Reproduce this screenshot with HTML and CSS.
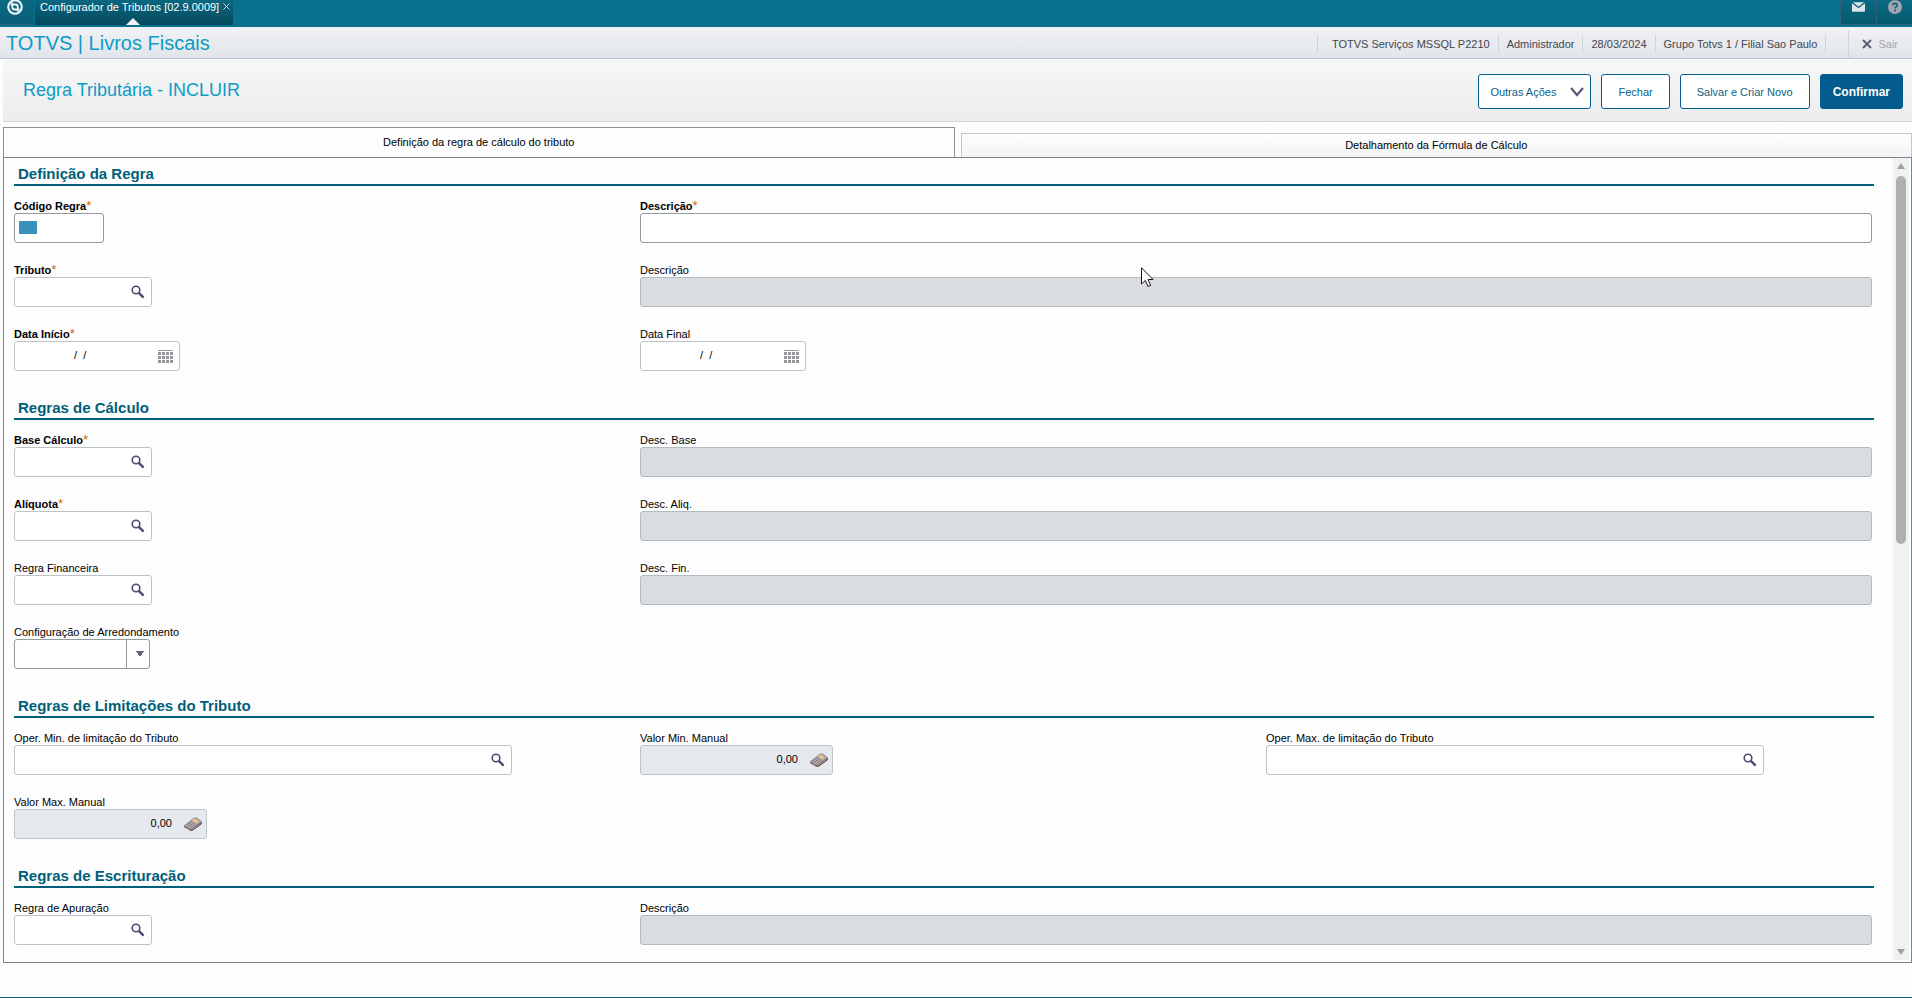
FILE: index.html
```html
<!DOCTYPE html>
<html lang="pt-BR">
<head>
    <meta charset="UTF-8">
    <meta name="viewport" content="width=device-width, initial-scale=1.0">
    <title>Configurador de Tributos</title>
    <link rel="stylesheet" href="styles.css">
</head>
<body>

    <!-- Shared icons -->
    <svg class="sprite" aria-hidden="true">
        <symbol id="icon-search" viewBox="0 0 14 14">
            <circle cx="5" cy="5" r="3.8" fill="none" stroke="#4a4a70" stroke-width="1.6"/>
            <path d="M7.8 7.8L12.6 12.6" stroke="#4a4a70" stroke-width="2.4"/>
        </symbol>
        <symbol id="icon-calendar" viewBox="0 0 15 13">
            <path d="M0 .5H15" stroke="#96969c" stroke-width="1"/>
            <path d="M0 3.5H15M0 7.5H15M0 11.5H15" stroke="#96969c" stroke-width="3" stroke-dasharray="3 1"/>
        </symbol>
        <symbol id="icon-calc" viewBox="0 0 18 14">
            <path d="M0 8.5L9 1.2Q11 0 13 .8L17.5 4.3V7L9 13Q7.500 14 5 13L0 10.500Z" fill="#8b8285"/>
            <path d="M.8 8.300L9.500 1.500Q11 .8 12.500 1.500L16.500 4.500L8.500 10.500Q7 11.500 5 10.500Z" fill="#b9b2ac"/>
            <path d="M8.500 3.200L10.500 1.700L14.500 4.500L12.300 6Z" fill="#f2c584"/>
            <path d="M2.500 8.200L7.500 4.500M4.500 9.200L9.500 5.500M6.800 10L11.500 6.500" stroke="#7b7375" stroke-width="1.200" stroke-dasharray="1.500 .8"/>
            <path d="M17.300 5V7L9 13Q7.500 14 5.500 13" fill="none" stroke="#6b4f58" stroke-width="1"/>
        </symbol>
    </svg>

    <!-- Top bar -->
    <div class="topbar">
        <button class="logo" aria-label="Início">
            <svg width="16" height="16" viewBox="0 0 16 16">
                <circle cx="8" cy="8" r="6.800" fill="none" stroke="#f4f8fa" stroke-width="2"/>
                <path d="M3.500 5.500H8.500Q10.800 5.500 10.800 8V12.500" fill="none" stroke="#f4f8fa" stroke-width="1.800"/>
                <path d="M5.300 3.500V8Q5.300 10.500 7.700 10.500H12.500" fill="none" stroke="#f4f8fa" stroke-width="1.800"/>
            </svg>
        </button>
        <div class="window-tab">
            <span>Configurador de Tributos [02.9.0009]</span>
            <button class="window-close" aria-label="Fechar aba">
                <svg width="7" height="7" viewBox="0 0 7 7"><path d="M.5 .5L6.500 6.500M6.500 .5L.5 6.500" stroke="#c6dbe2"/></svg>
            </button>
        </div>
        <div class="topbar-tools">
            <button class="tool" aria-label="Mensagens">
                <svg width="13" height="10" viewBox="0 0 14 10">
                    <rect width="14" height="10" rx="1" fill="#dde5e9"/>
                    <path d="M0 0L7 5.500L14 0" fill="none" stroke="#0b6178" stroke-width="1.400"/>
                </svg>
            </button>
            <button class="tool" aria-label="Ajuda">
                <svg width="14" height="14" viewBox="0 0 14 14">
                    <circle cx="7" cy="7" r="7" fill="#a3a6ac"/>
                    <path d="M4.800 5.300Q4.900 3.300 7 3.300T9.200 5.200Q9.200 6.200 8 6.900Q7 7.500 7 8.600" fill="none" stroke="#0b6178" stroke-width="1.700"/>
                    <rect x="6.100" y="9.600" width="1.800" height="1.800" fill="#0b6178"/>
                </svg>
            </button>
        </div>
    </div>

    <!-- Module header -->
    <header class="header">
        <h1>TOTVS | Livros Fiscais</h1>
        <ul class="session">
            <li>TOTVS Serviços MSSQL P2210</li>
            <li>Administrador</li>
            <li>28/03/2024</li>
            <li>Grupo Totvs 1 / Filial Sao Paulo</li>
        </ul>
        <button class="exit">
            <svg width="10" height="10" viewBox="0 0 10 10"><path d="M1 1L9 9M9 1L1 9" stroke="#5f5f74" stroke-width="2"/></svg>
            Sair
        </button>
    </header>

    <!-- Title and actions -->
    <div class="titlebar">
        <h2>Regra Tributária - INCLUIR</h2>
        <div class="actions">
            <button class="button button-menu">
                Outras Ações
                <svg width="14" height="10" viewBox="0 0 14 10"><path d="M1 1L7 8L13 1" fill="none" stroke="#5a5a78" stroke-width="2.200"/></svg>
            </button>
            <button class="button">Fechar</button>
            <button class="button">Salvar e Criar Novo</button>
            <button class="button button-primary">Confirmar</button>
        </div>
    </div>

    <div class="tabs" role="tablist">
        <button class="tab tab-active" role="tab" aria-selected="true">Definição da regra de cálculo do tributo</button>
        <button class="tab" role="tab" aria-selected="false">Detalhamento da Fórmula de Cálculo</button>
    </div>

    <main class="panel">
        <form class="form">

            <section class="section">
                <h3>Definição da Regra</h3>
                <div class="fields">
                    <div class="field">
                        <label class="required" for="codigo">Código Regra</label>
                        <div class="box box-code"><input type="text" id="codigo"></div>
                    </div>
                    <div class="field wide">
                        <label class="required" for="descricao">Descrição</label>
                        <div class="box box-strong"><input type="text" id="descricao"></div>
                    </div>
                    <div class="field">
                        <label class="required" for="tributo">Tributo</label>
                        <div class="box box-lookup">
                            <input type="text" id="tributo">
                            <button type="button" aria-label="Pesquisar"><svg width="14" height="14"><use href="#icon-search"/></svg></button>
                        </div>
                    </div>
                    <div class="field wide">
                        <label for="descTributo">Descrição</label>
                        <div class="box box-disabled"><input type="text" id="descTributo" disabled></div>
                    </div>
                    <div class="field">
                        <label class="required" for="dataInicio">Data Início</label>
                        <div class="box box-date">
                            <input type="text" id="dataInicio" value="/  /">
                            <button type="button" aria-label="Calendário"><svg width="15" height="13"><use href="#icon-calendar"/></svg></button>
                        </div>
                    </div>
                    <div class="field wide">
                        <label for="dataFinal">Data Final</label>
                        <div class="box box-date">
                            <input type="text" id="dataFinal" value="/  /">
                            <button type="button" aria-label="Calendário"><svg width="15" height="13"><use href="#icon-calendar"/></svg></button>
                        </div>
                    </div>
                </div>
            </section>

            <section class="section">
                <h3>Regras de Cálculo</h3>
                <div class="fields">
                    <div class="field">
                        <label class="required" for="base">Base Cálculo</label>
                        <div class="box box-lookup">
                            <input type="text" id="base">
                            <button type="button" aria-label="Pesquisar"><svg width="14" height="14"><use href="#icon-search"/></svg></button>
                        </div>
                    </div>
                    <div class="field wide">
                        <label for="descBase">Desc. Base</label>
                        <div class="box box-disabled"><input type="text" id="descBase" disabled></div>
                    </div>
                    <div class="field">
                        <label class="required" for="aliquota">Alíquota</label>
                        <div class="box box-lookup">
                            <input type="text" id="aliquota">
                            <button type="button" aria-label="Pesquisar"><svg width="14" height="14"><use href="#icon-search"/></svg></button>
                        </div>
                    </div>
                    <div class="field wide">
                        <label for="descAliq">Desc. Aliq.</label>
                        <div class="box box-disabled"><input type="text" id="descAliq" disabled></div>
                    </div>
                    <div class="field">
                        <label for="financeira">Regra Financeira</label>
                        <div class="box box-lookup">
                            <input type="text" id="financeira">
                            <button type="button" aria-label="Pesquisar"><svg width="14" height="14"><use href="#icon-search"/></svg></button>
                        </div>
                    </div>
                    <div class="field wide">
                        <label for="descFin">Desc. Fin.</label>
                        <div class="box box-disabled"><input type="text" id="descFin" disabled></div>
                    </div>
                    <div class="field">
                        <label for="arredondamento">Configuração de Arredondamento</label>
                        <div class="box box-select">
                            <select id="arredondamento"><option></option></select>
                        </div>
                    </div>
                </div>
            </section>

            <section class="section">
                <h3>Regras de Limitações do Tributo</h3>
                <div class="fields">
                    <div class="field">
                        <label for="operMin">Oper. Min. de limitação do Tributo</label>
                        <div class="box box-lookup box-long">
                            <input type="text" id="operMin">
                            <button type="button" aria-label="Pesquisar"><svg width="14" height="14"><use href="#icon-search"/></svg></button>
                        </div>
                    </div>
                    <div class="field">
                        <label for="valorMin">Valor Min. Manual</label>
                        <div class="box box-value">
                            <input type="text" id="valorMin" value="0,00">
                            <button type="button" aria-label="Calculadora"><svg width="18" height="14"><use href="#icon-calc"/></svg></button>
                        </div>
                    </div>
                    <div class="field">
                        <label for="operMax">Oper. Max. de limitação do Tributo</label>
                        <div class="box box-lookup box-long">
                            <input type="text" id="operMax">
                            <button type="button" aria-label="Pesquisar"><svg width="14" height="14"><use href="#icon-search"/></svg></button>
                        </div>
                    </div>
                    <div class="field">
                        <label for="valorMax">Valor Max. Manual</label>
                        <div class="box box-value">
                            <input type="text" id="valorMax" value="0,00">
                            <button type="button" aria-label="Calculadora"><svg width="18" height="14"><use href="#icon-calc"/></svg></button>
                        </div>
                    </div>
                </div>
            </section>

            <section class="section">
                <h3>Regras de Escrituração</h3>
                <div class="fields">
                    <div class="field">
                        <label for="apuracao">Regra de Apuração</label>
                        <div class="box box-lookup">
                            <input type="text" id="apuracao">
                            <button type="button" aria-label="Pesquisar"><svg width="14" height="14"><use href="#icon-search"/></svg></button>
                        </div>
                    </div>
                    <div class="field wide">
                        <label for="descApuracao">Descrição</label>
                        <div class="box box-disabled"><input type="text" id="descApuracao" disabled></div>
                    </div>
                </div>
            </section>

        </form>

        <div class="scrollbar" aria-hidden="true">
            <svg width="8" height="6" viewBox="0 0 8 6"><path d="M4 0L8 6H0Z" fill="#a0a0a0"/></svg>
            <div class="track"><div class="thumb"></div></div>
            <svg width="8" height="6" viewBox="0 0 8 6"><path d="M0 0H8L4 6Z" fill="#a0a0a0"/></svg>
        </div>
    </main>

    <!-- Mouse pointer -->
    <svg class="pointer" width="13" height="21" viewBox="0 0 13 21" aria-hidden="true">
        <path d="M.5 .8V17L4.300 13.500L7 19.500L9.600 18.400L7 12.500H12Z" fill="#fff" stroke="#1c1024"/>
    </svg>

</body>
</html>
```
FILE: styles.css
```css
* {
    box-sizing: border-box;
}

body {
    margin: 0;
    min-height: 100vh;
    display: flex;
    flex-direction: column;
    position: relative;
    background: #fdfdfd;
    border-bottom: 1px solid #0b6178;
    font-family: "Liberation Sans", Arial, sans-serif;
    font-size: 11px;
    line-height: 14px;
    color: #000;
}

button,
input,
select {
    font: inherit;
    color: inherit;
    margin: 0;
    padding: 0;
    border: 0;
    background: none;
}

button {
    cursor: pointer;
}

svg {
    display: block;
}

h1,
h2,
h3 {
    margin: 0;
    font-weight: normal;
}

.sprite {
    position: absolute;
    width: 0;
    height: 0;
}

/* Top bar */
.topbar {
    display: flex;
    height: 27px;
    padding-bottom: 2px;
    background: #09718e;
}

.logo {
    width: 34px;
    padding: 0 0 10px 7px;
    background: linear-gradient(#0a6a84, #096078);
    border-right: 1px solid #215f78;
    border-bottom: 1px solid #315f78;
    display: flex;
    align-items: center;
}

.window-tab {
    position: relative;
    display: flex;
    align-items: flex-start;
    gap: 4px;
    margin-left: 1px;
    padding: 0 3px 0 5px;
    background: linear-gradient(#0a6780, #054a5c);
    color: #fff;
}

.window-tab::after {
    content: "";
    position: absolute;
    left: 50%;
    bottom: 0;
    margin-left: -8px;
    border: 7px solid transparent;
    border-top: 0;
    border-bottom-color: #eff1f4;
}

.window-close {
    padding-top: 3px;
}

.topbar-tools {
    display: flex;
    margin-left: auto;
}

.tool {
    width: 36px;
    padding-bottom: 10px;
    display: flex;
    align-items: center;
    justify-content: center;
    background: linear-gradient(#0a6a84, #06586e);
    border-left: 1px solid #315f78;
    border-bottom: 1px solid #315f78;
}

/* Module header */
.header {
    display: flex;
    align-items: stretch;
    height: 32px;
    padding-left: 6px;
    background: linear-gradient(#f0f2f5, #e1e4e9);
    border-bottom: 1px solid #bcc3ca;
}

.header h1 {
    margin-right: auto;
    font-size: 20px;
    line-height: 33px;
    color: #0d9bc6;
}

.session {
    display: flex;
    align-items: center;
    margin: 0;
    padding: 2px 22px 0 0;
    list-style: none;
    color: #45454d;
}

.session li {
    padding: 2px 8px;
    border-left: 1px solid #d0d4d6;
}

.session li:first-child {
    padding-left: 14px;
}

.session li:last-child {
    border-right: 1px solid #d0d4d6;
}

.exit {
    display: flex;
    align-items: center;
    gap: 6px;
    margin-top: 3px;
    padding: 0 14px 1px 13px;
    border-left: 1px solid #d0d4d6;
    color: #a3a3a8;
}

/* Title and actions */
.titlebar {
    display: flex;
    justify-content: space-between;
    align-items: flex-start;
    height: 63px;
    margin-left: 3px;
    padding: 15px 9px 0 20px;
    background: linear-gradient(#f6f8f7, #ebecee);
    border-bottom: 1px solid #d2d5d7;
}

.titlebar h2 {
    font-size: 18px;
    line-height: 32px;
    color: #0d9bc6;
}

.actions {
    display: flex;
    gap: 10px;
}

.button {
    height: 35px;
    padding: 0 16px;
    background: #fff;
    border: 1px solid #045b8d;
    border-radius: 3px;
    color: #0a6285;
}

.button-menu {
    display: flex;
    align-items: center;
    gap: 14px;
    padding: 0 6px 0 11px;
}

.button-primary {
    padding: 0 12px;
    background: #045b8d;
    font-size: 12px;
    font-weight: bold;
    color: #fff;
}

/* Tabs */
.tabs {
    display: flex;
    align-items: flex-end;
    gap: 6px;
    height: 35px;
    margin-left: 3px;
}

.tab {
    flex: 1;
    height: 24px;
    padding-bottom: 1px;
    background: linear-gradient(#fdfdfd, #f3f3f3);
    border: 1px solid #c4c6c8;
    border-bottom: 0;
}

.tab-active {
    height: 30px;
    background: #fdfdfd;
    border-color: #8e9093;
}

/* Form panel */
.panel {
    flex: 1;
    display: flex;
    margin: 0 0 34px 3px;
    border: 1px solid #7f8288;
}

.form {
    flex: 1;
    padding: 0 19px 0 10px;
}

.section {
    padding-bottom: 21px;
}

.section:last-child {
    padding-bottom: 17px;
}

.section h3 {
    padding: 7px 4px 1px;
    border-bottom: 2px solid #005f7a;
    font-size: 15px;
    line-height: 18px;
    font-weight: bold;
    color: #005f7a;
}

.fields {
    display: grid;
    grid-template-columns: repeat(3, 1fr);
    gap: 20px;
    padding: 13px 2px 0 0;
}

.wide {
    grid-column: span 2;
}

.field label {
    display: block;
    height: 14px;
}

.required {
    font-weight: bold;
}

.required::after {
    content: "*";
    font-size: 13px;
    font-weight: normal;
    line-height: 1;
    color: #d06a00;
}

.box {
    display: flex;
    align-items: center;
    height: 30px;
    border: 1px solid #c0c3c4;
    border-radius: 3px;
    background: #fff;
}

.box input {
    flex: 1;
    min-width: 0;
    height: 100%;
    padding: 0 5px 2px;
    outline: none;
}

.box-strong {
    border-color: #929c9e;
}

.box-code {
    width: 90px;
    border-color: #929c9e;
}

.box-code input {
    background: linear-gradient(#3990bb, #3990bb) 4px 7px / 18px 13px no-repeat;
}

.box-lookup {
    width: 138px;
    padding-right: 6px;
}

.box-long {
    width: 498px;
}

.box-date {
    width: 166px;
    padding-right: 6px;
}

.box-date input {
    padding-left: 59px;
}

.box-disabled {
    background: #d9dde0;
    border-color: #b4bbbe;
}

.box-value {
    width: 193px;
    padding-right: 4px;
    background: #e6e9ee;
}

.box-value input {
    padding-right: 12px;
    text-align: right;
}

.box-select {
    width: 136px;
    border-color: #929c9e;
}

.box-select select {
    appearance: none;
    width: 100%;
    height: 100%;
    background:
        conic-gradient(from -34deg at 50% 100%, #62627a 68deg, transparent 0) right 5px center / 8px 6px no-repeat,
        linear-gradient(#929c9e, #929c9e) right 22px top / 1px 100% no-repeat;
}

/* Scroll bar */
.scrollbar {
    display: flex;
    flex-direction: column;
    align-items: center;
    width: 16px;
    margin: 0 2px 2px 0;
    padding: 5px 0;
    background: #f0f2f1;
}

.track {
    flex: 1;
    width: 10px;
    margin: 7px 0;
}

.thumb {
    height: 48%;
    border-radius: 5px;
    background: #b0b0b0;
}

.pointer {
    position: absolute;
    left: 1141px;
    top: 267px;
}
```
